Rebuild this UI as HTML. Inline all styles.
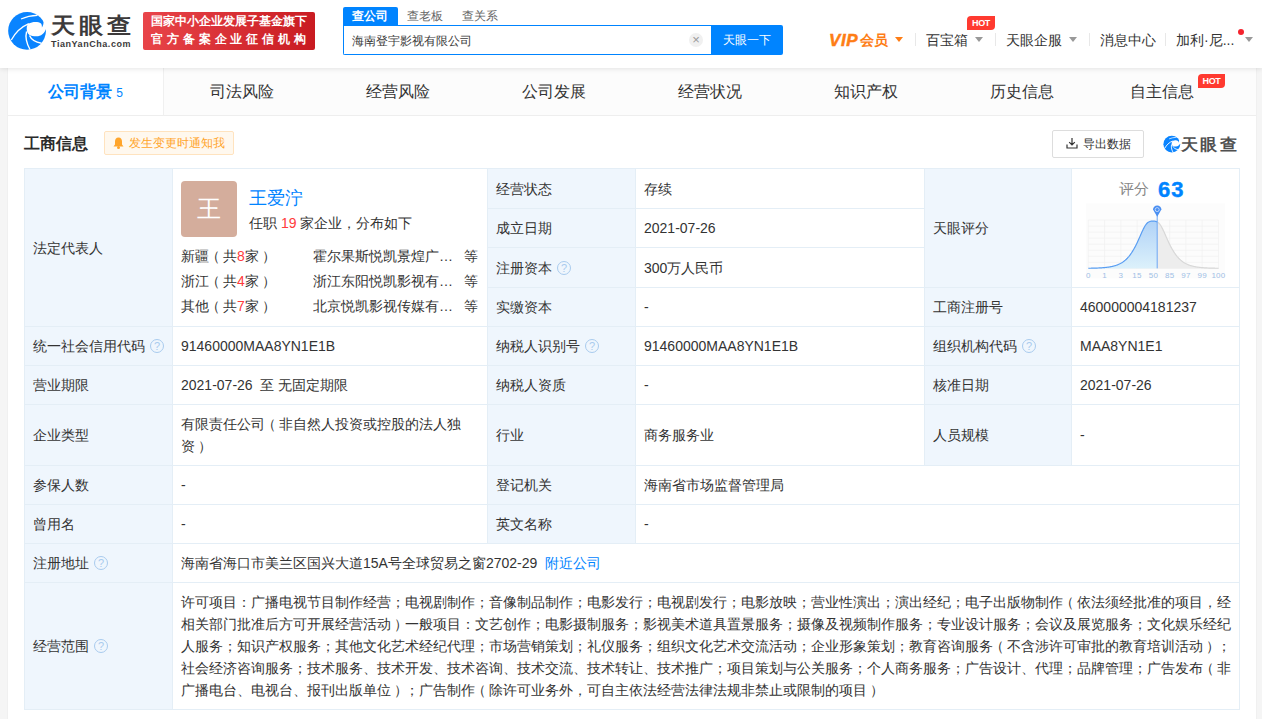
<!DOCTYPE html>
<html><head><meta charset="utf-8">
<style>
*{margin:0;padding:0;box-sizing:border-box}
html,body{width:1262px;height:719px;overflow:hidden}
body{position:relative;background:#f5f5f5;font-family:"Liberation Sans",sans-serif;color:#333;font-size:14px}
.a{position:absolute;white-space:nowrap}
#hdr{position:absolute;left:0;top:0;width:1262px;height:68px;background:#fff;box-shadow:0 1px 5px rgba(0,0,0,.1);z-index:2}
#card{position:absolute;left:8px;top:68px;width:1248px;height:651px;background:#fff;box-shadow:0 0 1px rgba(0,0,0,.12)}
.tab{position:absolute;top:68px;height:48px;width:156px;text-align:center;line-height:48px;font-size:16px;color:#333;background:#fcfcfc;border-bottom:1px solid #eee}
.tab.on{background:#fff;color:#0084ff;font-weight:bold;border-right:1px solid #f0f0f0}
#tbl{position:absolute;left:24px;top:168px;width:1216px;height:542px;border-top:1px solid #e4eef6;border-left:1px solid #e4eef6}
.c{position:absolute;border-right:1px solid #e4eef6;border-bottom:1px solid #e4eef6;display:flex;align-items:center;padding:0 8px;line-height:22px;white-space:nowrap}
.l{background:#eff6fd}
.q{display:inline-block;width:14px;height:14px;border:1px solid #a9cbee;border-radius:50%;color:#a9cbee;font-size:11px;line-height:13px;text-align:center;margin-left:5px;vertical-align:middle}

.lp{position:relative;left:-3px}
.rp{position:relative;left:3px}
</style></head><body>
<div id="hdr">
<svg class="a" style="left:5px;top:8px" width="45" height="45" viewBox="0 0 45 45">
<circle cx="22.05" cy="22.85" r="18.9" fill="#0a84ff"/>
<path d="M23.8,15.6 C27,13.8 33,13.2 36,15.6 C36.8,16.5 37,18 36.9,19.6 C38.2,17.6 38.8,15 38.6,12.6 L44,11 L44,21 L41,21 C39.5,25.5 36,28.3 31.5,28.3 C28.5,28.3 26,27.8 24.5,27 C22,25.5 21.4,22 21.8,19 C22.1,17.5 22.8,16.3 23.8,15.6 Z" fill="#fff"/>
<path d="M6.3,32 C10,25 16,19 23.8,15.6" stroke="#fff" stroke-width="1.3" fill="none"/>
<path d="M21.6,23.5 C20.4,28 20.8,34 25,41.5" stroke="#fff" stroke-width="1.4" fill="none"/>
<path d="M24.5,27.5 C26,31 29,34 36.5,35.2" stroke="#fff" stroke-width="1.4" fill="none"/>
<path d="M16,11 C21,8.8 27,7.6 32.5,7.4" stroke="#fff" stroke-width="1.1" fill="none"/>
</svg>
<div class="a" style="left:51px;top:11px;font-size:22px;line-height:30px;color:#3c3a3a;letter-spacing:3.5px;font-weight:bold;transform:scaleX(1.1);transform-origin:0 0">天眼查</div>
<div class="a" style="left:51px;top:38px;font-size:9px;line-height:12px;color:#3c3a3a;letter-spacing:0.55px;font-weight:bold">TianYanCha.com</div>
<div class="a" style="left:143px;top:12px;width:172px;height:38px;border-radius:2px;background:linear-gradient(100deg,#e9454a,#c81a20)"></div>
<div class="a" style="left:151px;top:12px;font-size:12px;line-height:18px;color:#fff;letter-spacing:0px;font-weight:bold">国家中小企业发展子基金旗下</div>
<div class="a" style="left:151px;top:29.5px;font-size:12px;line-height:18px;color:#fff;letter-spacing:3.9px;font-weight:bold">官方备案企业征信机构</div>
<div class="a" style="left:343px;top:7px;width:55px;height:19px;background:#0084ff;border-radius:2px 2px 0 0"></div>
<div class="a" style="left:352px;top:7px;font-size:12px;line-height:18px;color:#fff;font-weight:bold">查公司</div>
<div class="a" style="left:407px;top:7px;font-size:12px;line-height:18px;color:#666">查老板</div>
<div class="a" style="left:462px;top:7px;font-size:12px;line-height:18px;color:#666">查关系</div>
<div class="a" style="left:343px;top:25px;width:369px;height:30px;border:1px solid #0084ff;border-right:0;border-radius:0 0 0 2px;background:#fff"></div>
<div class="a" style="left:352px;top:31.5px;font-size:12px;line-height:18px;color:#3a3a3a">海南登宇影视有限公司</div>
<div class="a" style="left:689px;top:33px;width:14px;height:14px;border-radius:50%;background:#f0f0f0;color:#999;font-size:13px;line-height:14px;text-align:center">×</div>
<div class="a" style="left:711px;top:25px;width:72px;height:30px;background:#0084ff;border-radius:0 2px 2px 0;color:#fff;font-size:12px;line-height:30px;text-align:center">天眼一下</div>
<div class="a" style="left:829px;top:30px;font-size:17px;line-height:22px;color:#fe7d15;font-weight:bold"><i style="font-style:italic;letter-spacing:0.6px;-webkit-text-stroke:0.5px #fe7d15">VIP</i><span style="font-size:14px;margin-left:2px;position:relative;top:-1px">会员</span></div>
<div class="a" style="left:895px;top:37px;width:0;height:0;border-left:4px solid transparent;border-right:4px solid transparent;border-top:5px solid #fe7d15"></div>
<div class="a" style="left:915px;top:33px;width:1px;height:13px;background:#e8e8e8"></div>
<div class="a" style="left:926px;top:30px;font-size:14px;line-height:20px;color:#333">百宝箱</div>
<div class="a" style="left:975px;top:37px;width:0;height:0;border-left:4px solid transparent;border-right:4px solid transparent;border-top:5px solid #999"></div>
<div class="a" style="left:967px;top:16px;width:28px;height:14px;background:#ff3c3c;border-radius:4px 0 4px 0;color:#fff;font-size:9px;line-height:14px;text-align:center;font-weight:bold;letter-spacing:-0.4px;background:#ff3a30">HOT</div>
<div class="a" style="left:995px;top:33px;width:1px;height:13px;background:#e8e8e8"></div>
<div class="a" style="left:1006px;top:30px;font-size:14px;line-height:20px;color:#333">天眼企服</div>
<div class="a" style="left:1069px;top:37px;width:0;height:0;border-left:4px solid transparent;border-right:4px solid transparent;border-top:5px solid #999"></div>
<div class="a" style="left:1089px;top:33px;width:1px;height:13px;background:#e8e8e8"></div>
<div class="a" style="left:1100px;top:30px;font-size:14px;line-height:20px;color:#333">消息中心</div>
<div class="a" style="left:1165px;top:33px;width:1px;height:13px;background:#e8e8e8"></div>
<div class="a" style="left:1176px;top:30px;font-size:14px;line-height:20px;color:#333">加利·尼...</div>
<div class="a" style="left:1238px;top:29px;width:6px;height:6px;border-radius:50%;background:#f5222d"></div>
<div class="a" style="left:1245px;top:37px;width:0;height:0;border-left:4px solid transparent;border-right:4px solid transparent;border-top:5px solid #999"></div>
</div>
<div id="card"></div>
<div class="a tab on" style="left:8px;width:156px">公司背景<span style="font-size:12px;font-weight:normal;margin-left:4px">5</span></div>
<div class="a tab" style="left:164px;width:156px">司法风险</div>
<div class="a tab" style="left:320px;width:156px">经营风险</div>
<div class="a tab" style="left:476px;width:156px">公司发展</div>
<div class="a tab" style="left:632px;width:156px">经营状况</div>
<div class="a tab" style="left:788px;width:156px">知识产权</div>
<div class="a tab" style="left:944px;width:156px">历史信息</div>
<div class="a tab" style="left:1100px;width:156px">自主信息<span style="display:inline-block;width:27px;margin-left:5px"></span></div>
<div class="a" style="left:1198px;top:74px;width:27px;height:14px;background:#ff3c3c;border-radius:4px 0 4px 0;color:#fff;font-size:9px;line-height:14px;text-align:center;font-weight:bold;letter-spacing:-0.4px;background:#ff3a30">HOT</div>
<div class="a" style="left:24px;top:132px;font-size:16px;line-height:24px;font-weight:bold;color:#2b2b2b">工商信息</div>
<div class="a" style="left:104px;top:131px;width:130px;height:24px;background:#fff8ee;border:1px solid #ffe3bf;border-radius:2px"></div>
<svg class="a" style="left:113px;top:137px" width="11" height="12" viewBox="0 0 11 12"><path d="M5.5,0.5 C3,0.5 2,2.5 2,4.5 L2,7.5 L0.5,9.5 L10.5,9.5 L9,7.5 L9,4.5 C9,2.5 8,0.5 5.5,0.5 Z" fill="#ffa52b"/><circle cx="5.5" cy="10.5" r="1.5" fill="#ffa52b"/></svg>
<div class="a" style="left:129px;top:134px;font-size:12px;line-height:18px;color:#ffa52b">发生变更时通知我</div>
<div class="a" style="left:1052px;top:130px;width:92px;height:28px;border:1px solid #ddd;border-radius:2px;background:#fff"></div>
<svg class="a" style="left:1066px;top:137px" width="12" height="12" viewBox="0 0 12 12"><path d="M6,1 L6,8 M3.2,5.2 L6,8 L8.8,5.2 M1,7.5 L1,11 L11,11 L11,7.5" stroke="#333" stroke-width="1.2" fill="none"/></svg>
<div class="a" style="left:1083px;top:135px;font-size:12px;line-height:18px;color:#333">导出数据</div>
<svg class="a" style="left:1162px;top:134px" width="20" height="20" viewBox="0 0 45 45">
<circle cx="22.05" cy="22.85" r="18.9" fill="#0a84ff"/>
<path d="M23.8,15.6 C27,13.8 33,13.2 36,15.6 C36.8,16.5 37,18 36.9,19.6 C38.2,17.6 38.8,15 38.6,12.6 L44,11 L44,21 L41,21 C39.5,25.5 36,28.3 31.5,28.3 C28.5,28.3 26,27.8 24.5,27 C22,25.5 21.4,22 21.8,19 C22.1,17.5 22.8,16.3 23.8,15.6 Z" fill="#fff"/>
<path d="M6.3,32 C10,25 16,19 23.8,15.6" stroke="#fff" stroke-width="2" fill="none"/>
<path d="M21.6,23.5 C20.4,28 20.8,34 25,41.5" stroke="#fff" stroke-width="2" fill="none"/>
<path d="M24.5,27.5 C26,31 29,34 36.5,35.2" stroke="#fff" stroke-width="2" fill="none"/>
<path d="M16,11 C21,8.8 27,7.6 32.5,7.4" stroke="#fff" stroke-width="1.6" fill="none"/>
</svg>
<div class="a" style="left:1181px;top:132px;font-size:16px;line-height:26px;color:#505050;font-weight:bold;letter-spacing:2.2px;transform:scaleX(1.07);transform-origin:0 0">天眼查</div>
<div class="a" style="left:24px;top:168px;width:1216px;height:542px;border-top:1px solid #e4eef6;border-left:1px solid #e4eef6"></div>
<div class="c l" style="left:25px;top:169px;width:148px;height:158px;">法定代表人</div>
<div class="c" style="left:173px;top:169px;width:315px;height:158px;display:block;padding:0"><div class="a" style="left:8px;top:12px;width:56px;height:56px;border-radius:4px;background:#d4ad9c;color:#fff;font-size:24px;line-height:56px;text-align:center">王</div>
<div class="a" style="left:76px;top:16px;font-size:18px;line-height:26px;color:#0084ff">王爱泞</div>
<div class="a" style="left:76px;top:44px;font-size:14px;line-height:20px;color:#333">任职 <span style="color:#ff3b3b">19</span> 家企业，分布如下</div>
<div class="a" style="left:8px;top:75px;font-size:14px;line-height:25px;color:#333">新疆<span class="lp">（</span>共<span style="color:#ff3b3b">8</span>家<span class="rp">）</span><br>浙江<span class="lp">（</span>共<span style="color:#ff3b3b">4</span>家<span class="rp">）</span><br>其他<span class="lp">（</span>共<span style="color:#ff3b3b">7</span>家<span class="rp">）</span></div>
<div class="a" style="left:140px;top:75px;width:141px;font-size:14px;line-height:25px;color:#333"><div style="overflow:hidden;text-overflow:ellipsis">霍尔果斯悦凯景煌广告有限公司</div><div style="overflow:hidden;text-overflow:ellipsis">浙江东阳悦凯影视有限公司</div><div style="overflow:hidden;text-overflow:ellipsis">北京悦凯影视传媒有限公司</div></div>
<div class="a" style="left:291px;top:75px;font-size:14px;line-height:25px;color:#333">等<br>等<br>等</div></div>
<div class="c l" style="left:488px;top:169px;width:148px;height:40px;">经营状态</div>
<div class="c" style="left:636px;top:169px;width:289px;height:40px;">存续</div>
<div class="c l" style="left:488px;top:209px;width:148px;height:39px;">成立日期</div>
<div class="c" style="left:636px;top:209px;width:289px;height:39px;">2021-07-26</div>
<div class="c l" style="left:488px;top:248px;width:148px;height:40px;">注册资本<span class="q">?</span></div>
<div class="c" style="left:636px;top:248px;width:289px;height:40px;">300万人民币</div>
<div class="c l" style="left:488px;top:288px;width:148px;height:39px;">实缴资本</div>
<div class="c" style="left:636px;top:288px;width:289px;height:39px;">-</div>
<div class="c l" style="left:925px;top:169px;width:147px;height:119px;">天眼评分</div>
<div class="c" style="left:1072px;top:169px;width:168px;height:119px;display:block;padding:0"><div class="a" style="left:47px;top:10px;font-size:15px;line-height:20px;color:#888">评分</div>
<div class="a" style="left:86px;top:8px;font-size:22px;line-height:26px;color:#0084ff;font-weight:bold;letter-spacing:1px;-webkit-text-stroke:0.4px #0084ff">63</div>
<svg class="a" style="left:0;top:0" width="167" height="118" viewBox="0 0 167 118">
<rect x="13.799999999999955" y="34.400000000000006" width="139.20000000000005" height="74.99999999999997" fill="#fcfcfc"/>
<line x1="16.30" y1="51" x2="16.30" y2="99.39999999999998" stroke="#f0f0f0" stroke-width="0.7"/>
<line x1="32.58" y1="51" x2="32.58" y2="99.39999999999998" stroke="#f0f0f0" stroke-width="0.7"/>
<line x1="48.85" y1="51" x2="48.85" y2="99.39999999999998" stroke="#f0f0f0" stroke-width="0.7"/>
<line x1="65.12" y1="51" x2="65.12" y2="99.39999999999998" stroke="#f0f0f0" stroke-width="0.7"/>
<line x1="81.40" y1="51" x2="81.40" y2="99.39999999999998" stroke="#f0f0f0" stroke-width="0.7"/>
<line x1="97.67" y1="51" x2="97.67" y2="99.39999999999998" stroke="#f0f0f0" stroke-width="0.7"/>
<line x1="113.95" y1="51" x2="113.95" y2="99.39999999999998" stroke="#f0f0f0" stroke-width="0.7"/>
<line x1="130.22" y1="51" x2="130.22" y2="99.39999999999998" stroke="#f0f0f0" stroke-width="0.7"/>
<line x1="146.50" y1="51" x2="146.50" y2="99.39999999999998" stroke="#f0f0f0" stroke-width="0.7"/>
<line x1="16.299999999999955" y1="51.00" x2="146.5" y2="51.00" stroke="#f0f0f0" stroke-width="0.7"/>
<line x1="16.299999999999955" y1="57.05" x2="146.5" y2="57.05" stroke="#f0f0f0" stroke-width="0.7"/>
<line x1="16.299999999999955" y1="63.10" x2="146.5" y2="63.10" stroke="#f0f0f0" stroke-width="0.7"/>
<line x1="16.299999999999955" y1="69.15" x2="146.5" y2="69.15" stroke="#f0f0f0" stroke-width="0.7"/>
<line x1="16.299999999999955" y1="75.20" x2="146.5" y2="75.20" stroke="#f0f0f0" stroke-width="0.7"/>
<line x1="16.299999999999955" y1="81.25" x2="146.5" y2="81.25" stroke="#f0f0f0" stroke-width="0.7"/>
<line x1="16.299999999999955" y1="87.30" x2="146.5" y2="87.30" stroke="#f0f0f0" stroke-width="0.7"/>
<line x1="16.299999999999955" y1="93.35" x2="146.5" y2="93.35" stroke="#f0f0f0" stroke-width="0.7"/>
<line x1="16.299999999999955" y1="99.40" x2="146.5" y2="99.40" stroke="#f0f0f0" stroke-width="0.7"/>
<defs><linearGradient id="gb" x1="0" y1="0" x2="0" y2="1"><stop offset="0" stop-color="#b0d2f7"/><stop offset="1" stop-color="#dcf1fb"/></linearGradient></defs>
<path d="M16.30,99.27 L16.80,99.26 L17.30,99.25 L17.80,99.24 L18.30,99.24 L18.80,99.23 L19.30,99.22 L19.80,99.21 L20.30,99.19 L20.80,99.18 L21.30,99.17 L21.80,99.16 L22.30,99.14 L22.80,99.13 L23.30,99.11 L23.80,99.09 L24.30,99.07 L24.80,99.06 L25.30,99.04 L25.80,99.01 L26.30,98.99 L26.80,98.97 L27.30,98.94 L27.80,98.91 L28.30,98.89 L28.80,98.86 L29.30,98.82 L29.80,98.79 L30.30,98.76 L30.80,98.72 L31.30,98.68 L31.80,98.64 L32.30,98.59 L32.80,98.54 L33.30,98.49 L33.80,98.44 L34.30,98.39 L34.80,98.33 L35.30,98.26 L35.80,98.20 L36.30,98.13 L36.80,98.05 L37.30,97.98 L37.80,97.89 L38.30,97.81 L38.80,97.71 L39.30,97.62 L39.80,97.51 L40.30,97.40 L40.80,97.29 L41.30,97.17 L41.80,97.04 L42.30,96.90 L42.80,96.76 L43.30,96.61 L43.80,96.45 L44.30,96.28 L44.80,96.11 L45.30,95.92 L45.80,95.72 L46.30,95.51 L46.80,95.29 L47.30,95.06 L47.80,94.82 L48.30,94.56 L48.80,94.29 L49.30,94.00 L49.80,93.70 L50.30,93.39 L50.80,93.06 L51.30,92.71 L51.80,92.34 L52.30,91.96 L52.80,91.55 L53.30,91.13 L53.80,90.68 L54.30,90.22 L54.80,89.73 L55.30,89.22 L55.80,88.68 L56.30,88.12 L56.80,87.54 L57.30,86.93 L57.80,86.29 L58.30,85.63 L58.80,84.94 L59.30,84.22 L59.80,83.47 L60.30,82.69 L60.80,81.89 L61.30,81.05 L61.80,80.19 L62.30,79.30 L62.80,78.38 L63.30,77.43 L63.80,76.46 L64.30,75.46 L64.80,74.43 L65.30,73.39 L65.80,72.32 L66.30,71.23 L66.80,70.12 L67.30,69.00 L67.80,67.87 L68.30,66.74 L68.80,65.60 L69.30,64.47 L69.80,63.34 L70.30,62.24 L70.80,61.16 L71.30,60.11 L71.80,59.11 L72.30,58.17 L72.80,57.28 L73.30,56.47 L73.80,55.74 L74.30,55.08 L74.80,54.51 L75.30,54.02 L75.80,53.60 L76.30,53.25 L76.80,52.96 L77.30,52.73 L77.80,52.54 L78.30,52.39 L78.80,52.27 L79.30,52.18 L79.80,52.12 L80.30,52.08 L80.80,52.06 L81.30,52.07 L81.80,52.09 L82.30,52.13 L82.80,52.20 L83.30,52.29 L83.80,52.41 L84.30,52.57 L84.80,52.77 L85.20,52.96 L85.20,99.39999999999998 L16.299999999999955,99.39999999999998 Z" fill="url(#gb)"/>
<path d="M85.20,52.96 L85.70,53.25 L86.20,53.60 L86.70,54.02 L87.20,54.51 L87.70,55.08 L88.20,55.74 L88.70,56.47 L89.20,57.28 L89.70,58.17 L90.20,59.11 L90.70,60.11 L91.20,61.16 L91.70,62.24 L92.20,63.34 L92.70,64.47 L93.20,65.60 L93.70,66.74 L94.20,67.87 L94.70,69.00 L95.20,70.12 L95.70,71.23 L96.20,72.32 L96.70,73.39 L97.20,74.43 L97.70,75.46 L98.20,76.46 L98.70,77.43 L99.20,78.38 L99.70,79.30 L100.20,80.19 L100.70,81.05 L101.20,81.89 L101.70,82.69 L102.20,83.47 L102.70,84.22 L103.20,84.94 L103.70,85.63 L104.20,86.29 L104.70,86.93 L105.20,87.54 L105.70,88.12 L106.20,88.68 L106.70,89.22 L107.20,89.73 L107.70,90.22 L108.20,90.68 L108.70,91.13 L109.20,91.55 L109.70,91.96 L110.20,92.34 L110.70,92.71 L111.20,93.06 L111.70,93.39 L112.20,93.70 L112.70,94.00 L113.20,94.29 L113.70,94.56 L114.20,94.82 L114.70,95.06 L115.20,95.29 L115.70,95.51 L116.20,95.72 L116.70,95.92 L117.20,96.11 L117.70,96.28 L118.20,96.45 L118.70,96.61 L119.20,96.76 L119.70,96.90 L120.20,97.04 L120.70,97.17 L121.20,97.29 L121.70,97.40 L122.20,97.51 L122.70,97.62 L123.20,97.71 L123.70,97.81 L124.20,97.89 L124.70,97.98 L125.20,98.05 L125.70,98.13 L126.20,98.20 L126.70,98.26 L127.20,98.33 L127.70,98.39 L128.20,98.44 L128.70,98.49 L129.20,98.54 L129.70,98.59 L130.20,98.64 L130.70,98.68 L131.20,98.72 L131.70,98.76 L132.20,98.79 L132.70,98.82 L133.20,98.86 L133.70,98.89 L134.20,98.91 L134.70,98.94 L135.20,98.97 L135.70,98.99 L136.20,99.01 L136.70,99.04 L137.20,99.06 L137.70,99.07 L138.20,99.09 L138.70,99.11 L139.20,99.13 L139.70,99.14 L140.20,99.16 L140.70,99.17 L141.20,99.18 L141.70,99.19 L142.20,99.21 L142.70,99.22 L143.20,99.23 L143.70,99.24 L144.20,99.24 L144.70,99.25 L145.20,99.26 L145.70,99.27 L146.20,99.28 L146.50,99.28 L146.5,99.39999999999998 L85.20,99.39999999999998 Z" fill="#ededed"/>
<path d="M16.30,99.27 L16.80,99.26 L17.30,99.25 L17.80,99.24 L18.30,99.24 L18.80,99.23 L19.30,99.22 L19.80,99.21 L20.30,99.19 L20.80,99.18 L21.30,99.17 L21.80,99.16 L22.30,99.14 L22.80,99.13 L23.30,99.11 L23.80,99.09 L24.30,99.07 L24.80,99.06 L25.30,99.04 L25.80,99.01 L26.30,98.99 L26.80,98.97 L27.30,98.94 L27.80,98.91 L28.30,98.89 L28.80,98.86 L29.30,98.82 L29.80,98.79 L30.30,98.76 L30.80,98.72 L31.30,98.68 L31.80,98.64 L32.30,98.59 L32.80,98.54 L33.30,98.49 L33.80,98.44 L34.30,98.39 L34.80,98.33 L35.30,98.26 L35.80,98.20 L36.30,98.13 L36.80,98.05 L37.30,97.98 L37.80,97.89 L38.30,97.81 L38.80,97.71 L39.30,97.62 L39.80,97.51 L40.30,97.40 L40.80,97.29 L41.30,97.17 L41.80,97.04 L42.30,96.90 L42.80,96.76 L43.30,96.61 L43.80,96.45 L44.30,96.28 L44.80,96.11 L45.30,95.92 L45.80,95.72 L46.30,95.51 L46.80,95.29 L47.30,95.06 L47.80,94.82 L48.30,94.56 L48.80,94.29 L49.30,94.00 L49.80,93.70 L50.30,93.39 L50.80,93.06 L51.30,92.71 L51.80,92.34 L52.30,91.96 L52.80,91.55 L53.30,91.13 L53.80,90.68 L54.30,90.22 L54.80,89.73 L55.30,89.22 L55.80,88.68 L56.30,88.12 L56.80,87.54 L57.30,86.93 L57.80,86.29 L58.30,85.63 L58.80,84.94 L59.30,84.22 L59.80,83.47 L60.30,82.69 L60.80,81.89 L61.30,81.05 L61.80,80.19 L62.30,79.30 L62.80,78.38 L63.30,77.43 L63.80,76.46 L64.30,75.46 L64.80,74.43 L65.30,73.39 L65.80,72.32 L66.30,71.23 L66.80,70.12 L67.30,69.00 L67.80,67.87 L68.30,66.74 L68.80,65.60 L69.30,64.47 L69.80,63.34 L70.30,62.24 L70.80,61.16 L71.30,60.11 L71.80,59.11 L72.30,58.17 L72.80,57.28 L73.30,56.47 L73.80,55.74 L74.30,55.08 L74.80,54.51 L75.30,54.02 L75.80,53.60 L76.30,53.25 L76.80,52.96 L77.30,52.73 L77.80,52.54 L78.30,52.39 L78.80,52.27 L79.30,52.18 L79.80,52.12 L80.30,52.08 L80.80,52.06 L81.30,52.07 L81.80,52.09 L82.30,52.13 L82.80,52.20 L83.30,52.29 L83.80,52.41 L84.30,52.57 L84.80,52.77 L85.20,52.96" stroke="#5a9ef2" stroke-width="1.2" fill="none"/>
<path d="M85.20,52.96 L85.70,53.25 L86.20,53.60 L86.70,54.02 L87.20,54.51 L87.70,55.08 L88.20,55.74 L88.70,56.47 L89.20,57.28 L89.70,58.17 L90.20,59.11 L90.70,60.11 L91.20,61.16 L91.70,62.24 L92.20,63.34 L92.70,64.47 L93.20,65.60 L93.70,66.74 L94.20,67.87 L94.70,69.00 L95.20,70.12 L95.70,71.23 L96.20,72.32 L96.70,73.39 L97.20,74.43 L97.70,75.46 L98.20,76.46 L98.70,77.43 L99.20,78.38 L99.70,79.30 L100.20,80.19 L100.70,81.05 L101.20,81.89 L101.70,82.69 L102.20,83.47 L102.70,84.22 L103.20,84.94 L103.70,85.63 L104.20,86.29 L104.70,86.93 L105.20,87.54 L105.70,88.12 L106.20,88.68 L106.70,89.22 L107.20,89.73 L107.70,90.22 L108.20,90.68 L108.70,91.13 L109.20,91.55 L109.70,91.96 L110.20,92.34 L110.70,92.71 L111.20,93.06 L111.70,93.39 L112.20,93.70 L112.70,94.00 L113.20,94.29 L113.70,94.56 L114.20,94.82 L114.70,95.06 L115.20,95.29 L115.70,95.51 L116.20,95.72 L116.70,95.92 L117.20,96.11 L117.70,96.28 L118.20,96.45 L118.70,96.61 L119.20,96.76 L119.70,96.90 L120.20,97.04 L120.70,97.17 L121.20,97.29 L121.70,97.40 L122.20,97.51 L122.70,97.62 L123.20,97.71 L123.70,97.81 L124.20,97.89 L124.70,97.98 L125.20,98.05 L125.70,98.13 L126.20,98.20 L126.70,98.26 L127.20,98.33 L127.70,98.39 L128.20,98.44 L128.70,98.49 L129.20,98.54 L129.70,98.59 L130.20,98.64 L130.70,98.68 L131.20,98.72 L131.70,98.76 L132.20,98.79 L132.70,98.82 L133.20,98.86 L133.70,98.89 L134.20,98.91 L134.70,98.94 L135.20,98.97 L135.70,98.99 L136.20,99.01 L136.70,99.04 L137.20,99.06 L137.70,99.07 L138.20,99.09 L138.70,99.11 L139.20,99.13 L139.70,99.14 L140.20,99.16 L140.70,99.17 L141.20,99.18 L141.70,99.19 L142.20,99.21 L142.70,99.22 L143.20,99.23 L143.70,99.24 L144.20,99.24 L144.70,99.25 L145.20,99.26 L145.70,99.27 L146.20,99.28 L146.50,99.28" stroke="#d8d8d8" stroke-width="1.2" fill="none"/>
<line x1="85.20" y1="45" x2="85.20" y2="99.39999999999998" stroke="#6aa6f4" stroke-width="1"/>
<path d="M81.00,40.60 A4.2,4.2 0 1,1 89.40,40.60 L85.20,47.80 Z" fill="#4a8ff2"/>
<circle cx="85.20" cy="40.60" r="2" fill="none" stroke="#c9defa" stroke-width="0.9"/>
<text x="16.30" y="109" text-anchor="middle" font-size="8" fill="#9fbfe6" font-family="Liberation Sans" letter-spacing="0.3">0</text>
<text x="32.58" y="109" text-anchor="middle" font-size="8" fill="#9fbfe6" font-family="Liberation Sans" letter-spacing="0.3">1</text>
<text x="48.85" y="109" text-anchor="middle" font-size="8" fill="#9fbfe6" font-family="Liberation Sans" letter-spacing="0.3">3</text>
<text x="65.12" y="109" text-anchor="middle" font-size="8" fill="#9fbfe6" font-family="Liberation Sans" letter-spacing="0.3">15</text>
<text x="81.40" y="109" text-anchor="middle" font-size="8" fill="#9fbfe6" font-family="Liberation Sans" letter-spacing="0.3">50</text>
<text x="97.67" y="109" text-anchor="middle" font-size="8" fill="#9fbfe6" font-family="Liberation Sans" letter-spacing="0.3">85</text>
<text x="113.95" y="109" text-anchor="middle" font-size="8" fill="#9fbfe6" font-family="Liberation Sans" letter-spacing="0.3">97</text>
<text x="130.22" y="109" text-anchor="middle" font-size="8" fill="#9fbfe6" font-family="Liberation Sans" letter-spacing="0.3">99</text>
<text x="146.50" y="109" text-anchor="middle" font-size="8" fill="#9fbfe6" font-family="Liberation Sans" letter-spacing="0.3">100</text>
</svg></div>
<div class="c l" style="left:925px;top:288px;width:147px;height:39px;">工商注册号</div>
<div class="c" style="left:1072px;top:288px;width:168px;height:39px;">460000004181237</div>
<div class="c l" style="left:25px;top:327px;width:148px;height:39px;">统一社会信用代码<span class="q">?</span></div>
<div class="c" style="left:173px;top:327px;width:315px;height:39px;">91460000MAA8YN1E1B</div>
<div class="c l" style="left:488px;top:327px;width:148px;height:39px;">纳税人识别号<span class="q">?</span></div>
<div class="c" style="left:636px;top:327px;width:289px;height:39px;">91460000MAA8YN1E1B</div>
<div class="c l" style="left:925px;top:327px;width:147px;height:39px;">组织机构代码<span class="q">?</span></div>
<div class="c" style="left:1072px;top:327px;width:168px;height:39px;">MAA8YN1E1</div>
<div class="c l" style="left:25px;top:366px;width:148px;height:39px;">营业期限</div>
<div class="c" style="left:173px;top:366px;width:315px;height:39px;">2021-07-26&nbsp;&nbsp;至 无固定期限</div>
<div class="c l" style="left:488px;top:366px;width:148px;height:39px;">纳税人资质</div>
<div class="c" style="left:636px;top:366px;width:289px;height:39px;">-</div>
<div class="c l" style="left:925px;top:366px;width:147px;height:39px;">核准日期</div>
<div class="c" style="left:1072px;top:366px;width:168px;height:39px;">2021-07-26</div>
<div class="c l" style="left:25px;top:405px;width:148px;height:61px;">企业类型</div>
<div class="c" style="left:173px;top:405px;width:315px;height:61px;"><div>有限责任公司<span class="lp">（</span>非自然人投资或控股的法人独<br>资<span class="rp">）</span></div></div>
<div class="c l" style="left:488px;top:405px;width:148px;height:61px;">行业</div>
<div class="c" style="left:636px;top:405px;width:289px;height:61px;">商务服务业</div>
<div class="c l" style="left:925px;top:405px;width:147px;height:61px;">人员规模</div>
<div class="c" style="left:1072px;top:405px;width:168px;height:61px;">-</div>
<div class="c l" style="left:25px;top:466px;width:148px;height:39px;">参保人数</div>
<div class="c" style="left:173px;top:466px;width:315px;height:39px;">-</div>
<div class="c l" style="left:488px;top:466px;width:148px;height:39px;">登记机关</div>
<div class="c" style="left:636px;top:466px;width:604px;height:39px;">海南省市场监督管理局</div>
<div class="c l" style="left:25px;top:505px;width:148px;height:39px;">曾用名</div>
<div class="c" style="left:173px;top:505px;width:315px;height:39px;">-</div>
<div class="c l" style="left:488px;top:505px;width:148px;height:39px;">英文名称</div>
<div class="c" style="left:636px;top:505px;width:604px;height:39px;">-</div>
<div class="c l" style="left:25px;top:544px;width:148px;height:39px;">注册地址<span class="q">?</span></div>
<div class="c" style="left:173px;top:544px;width:1067px;height:39px;">海南省海口市美兰区国兴大道15A号全球贸易之窗2702-29<span style="color:#0084ff;margin-left:8px">附近公司</span></div>
<div class="c l" style="left:25px;top:583px;width:148px;height:127px;">经营范围<span class="q">?</span></div>
<div class="c" style="left:173px;top:583px;width:1067px;height:127px;"><div>许可项目：广播电视节目制作经营；电视剧制作；音像制品制作；电影发行；电视剧发行；电影放映；营业性演出；演出经纪；电子出版物制作<span class="lp">（</span>依法须经批准的项目，经<br>相关部门批准后方可开展经营活动<span class="rp">）</span>一般项目：文艺创作；电影摄制服务；影视美术道具置景服务；摄像及视频制作服务；专业设计服务；会议及展览服务；文化娱乐经纪<br>人服务；知识产权服务；其他文化艺术经纪代理；市场营销策划；礼仪服务；组织文化艺术交流活动；企业形象策划；教育咨询服务<span class="lp">（</span>不含涉许可审批的教育培训活动<span class="rp">）</span>；<br>社会经济咨询服务；技术服务、技术开发、技术咨询、技术交流、技术转让、技术推广；项目策划与公关服务；个人商务服务；广告设计、代理；品牌管理；广告发布<span class="lp">（</span>非<br>广播电台、电视台、报刊出版单位<span class="rp">）</span>；广告制作<span class="lp">（</span>除许可业务外，可自主依法经营法律法规非禁止或限制的项目<span class="rp">）</span></div></div>
</body></html>
